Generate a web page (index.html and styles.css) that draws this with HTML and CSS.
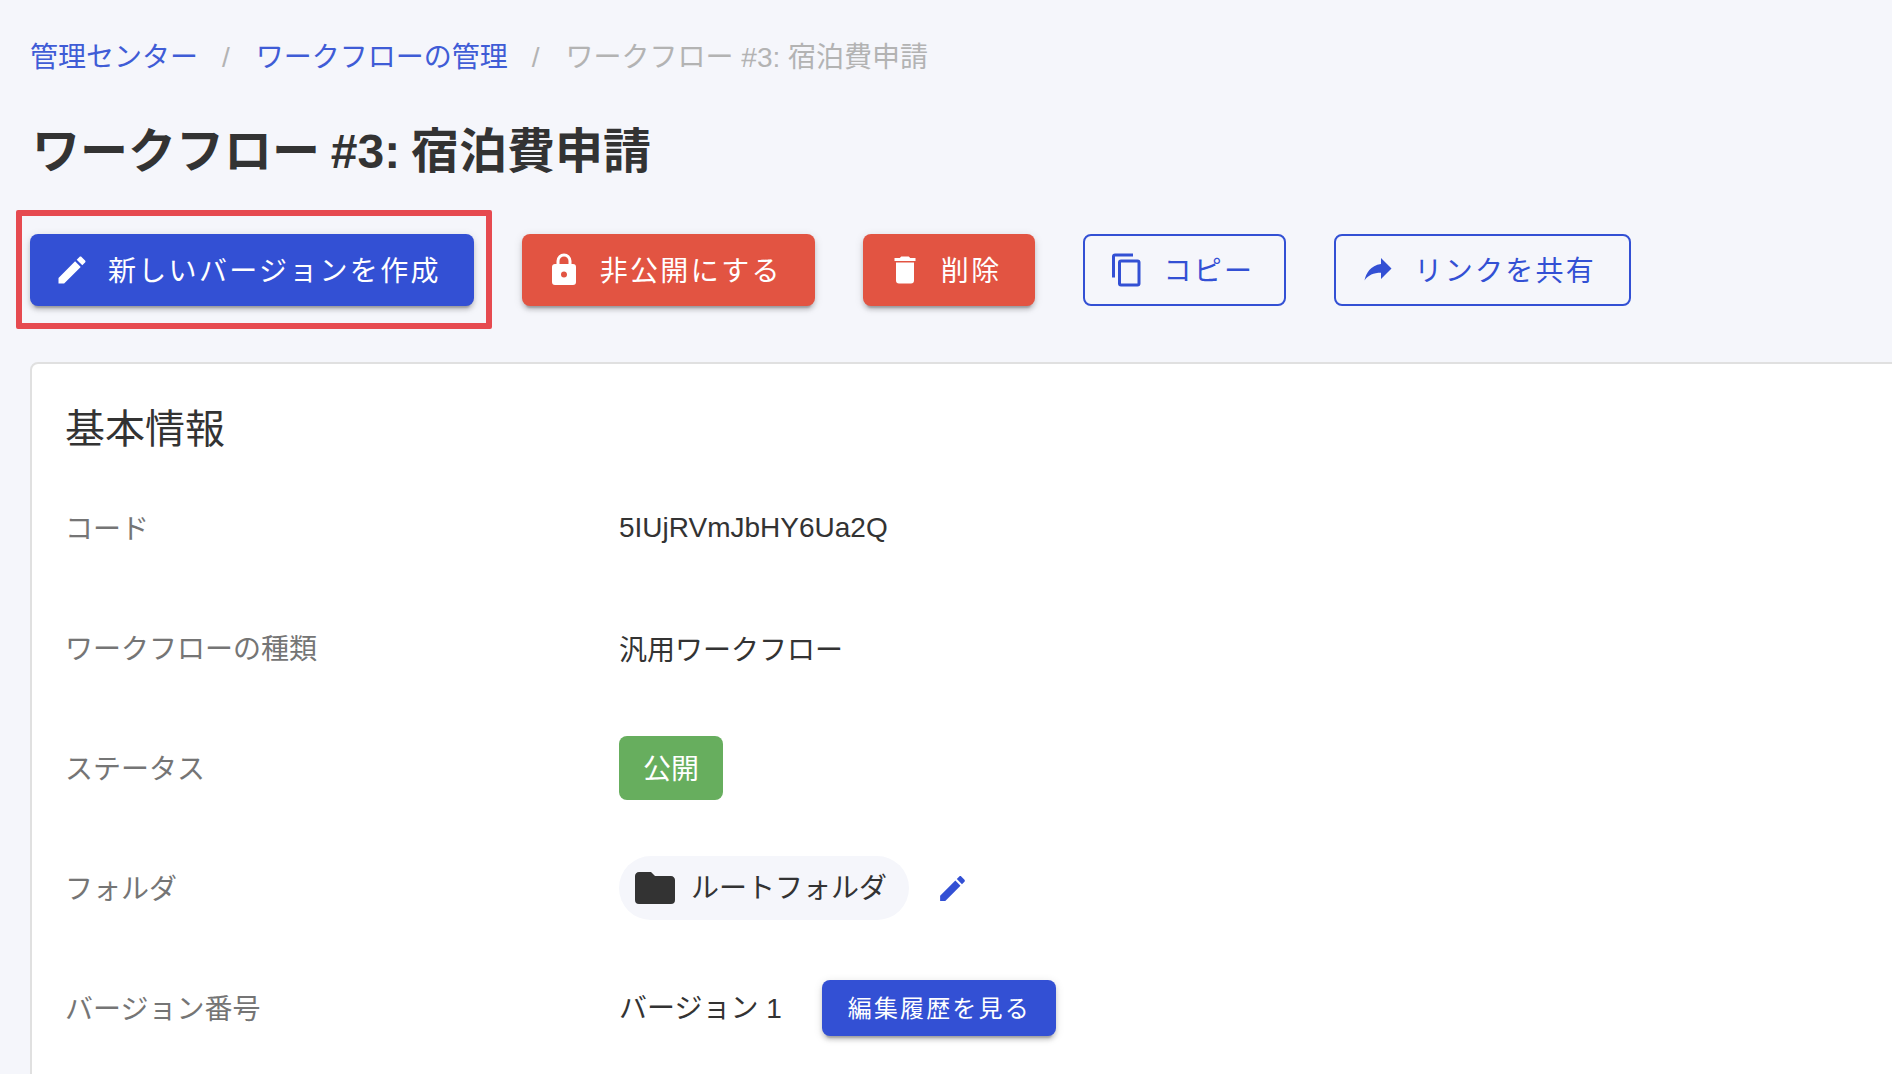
FILE: index.html
```html
<!DOCTYPE html>
<html lang="ja">
<head>
<meta charset="utf-8">
<title>ワークフロー #3: 宿泊費申請</title>
<link rel="stylesheet" href="styles.css">
</head>
<body>
<main class="page">
  <nav class="crumbs">
    <a class="crumb-link">管理センター</a>
    <span class="crumb-sep">/</span>
    <a class="crumb-link">ワークフローの管理</a>
    <span class="crumb-sep">/</span>
    <span class="crumb-current">ワークフロー #3: 宿泊費申請</span>
  </nav>
  <h1 class="title">ワークフロー #3: 宿泊費申請</h1>
  <div class="actions">
    <div class="highlight-wrap">
      <button class="btn btn-primary">
        <svg class="icon" viewBox="0 0 24 24"><path d="M20.71,7.04C21.1,6.65 21.1,6 20.71,5.63L18.37,3.29C18,2.9 17.35,2.9 16.96,3.29L15.12,5.12L18.87,8.87M3,17.25V21H6.75L17.81,9.93L14.06,6.18L3,17.25Z"/></svg>
        <span class="btn-text">新しいバージョンを作成</span>
      </button>
      <div class="highlight"></div>
    </div>
    <button class="btn btn-danger">
      <svg class="icon" viewBox="0 0 24 24"><path d="M12,17A2,2 0 0,0 14,15C14,13.89 13.1,13 12,13A2,2 0 0,0 10,15A2,2 0 0,0 12,17M18,8A2,2 0 0,1 20,10V20A2,2 0 0,1 18,22H6A2,2 0 0,1 4,20V10C4,8.89 4.9,8 6,8H7V6A5,5 0 0,1 12,1A5,5 0 0,1 17,6V8H18M12,3A3,3 0 0,0 9,6V8H15V6A3,3 0 0,0 12,3Z"/></svg>
      <span class="btn-text">非公開にする</span>
    </button>
    <button class="btn btn-danger btn-delete">
      <svg class="icon" viewBox="0 0 24 24"><path d="M19,4H15.5L14.5,3H9.5L8.5,4H5V6H19M6,19A2,2 0 0,0 8,21H16A2,2 0 0,0 18,19V7H6V19Z"/></svg>
      <span class="btn-text">削除</span>
    </button>
    <button class="btn btn-outline">
      <svg class="icon" viewBox="0 0 24 24"><path d="M19,21H8V7H19M19,5H8A2,2 0 0,0 6,7V21A2,2 0 0,0 8,23H19A2,2 0 0,0 21,21V7A2,2 0 0,0 19,5M16,1H4A2,2 0 0,0 2,3V17H4V3H16V1Z"/></svg>
      <span class="btn-text">コピー</span>
    </button>
    <button class="btn btn-outline btn-share">
      <svg class="icon" viewBox="0 0 24 24"><path d="M21,11L14,4V8C7,9 4,14 3,19C5.5,15.5 9,13.9 14,13.9V18L21,11Z"/></svg>
      <span class="btn-text">リンクを共有</span>
    </button>
  </div>
  <section class="card">
    <h2 class="card-title">基本情報</h2>
    <div class="row">
      <div class="label">コード</div>
      <div class="value">5IUjRVmJbHY6Ua2Q</div>
    </div>
    <div class="row">
      <div class="label">ワークフローの種類</div>
      <div class="value">汎用ワークフロー</div>
    </div>
    <div class="row">
      <div class="label">ステータス</div>
      <div class="value"><span class="status">公開</span></div>
    </div>
    <div class="row">
      <div class="label">フォルダ</div>
      <div class="value">
        <span class="folder-chip">
          <svg class="folder-icon" viewBox="0 0 24 24"><path d="M10,4H4C2.89,4 2,4.89 2,6V18A2,2 0 0,0 4,20H20A2,2 0 0,0 22,18V8C22,6.89 21.1,6 20,6H12L10,4Z"/></svg>
          <span class="folder-name">ルートフォルダ</span>
        </span>
        <svg class="edit-icon" viewBox="0 0 24 24"><path d="M20.71,7.04C21.1,6.65 21.1,6 20.71,5.63L18.37,3.29C18,2.9 17.35,2.9 16.96,3.29L15.12,5.12L18.87,8.87M3,17.25V21H6.75L17.81,9.93L14.06,6.18L3,17.25Z"/></svg>
      </div>
    </div>
    <div class="row">
      <div class="label">バージョン番号</div>
      <div class="value">
        <span class="version">バージョン 1</span>
        <button class="btn btn-primary btn-small"><span class="btn-text">編集履歴を見る</span></button>
      </div>
    </div>
  </section>
</main>
</body>
</html>
```

FILE: styles.css
```css
* { box-sizing: border-box; }
html, body { margin: 0; height: 100%; overflow: hidden; }
body {
  background: #f5f6fb;
  color: #333;
  font-family: "Liberation Sans", "Noto Sans CJK JP", sans-serif;
  font-size: 28px;
}
.page { padding: 38px 0 0 30px; }

.crumbs { display: flex; align-items: center; height: 40px; line-height: 40px; }
.crumb-link { color: #3f5cd6; }
.crumb-sep { padding: 0 26px 0 24px; color: #b3b3b3; }
.crumb-current { color: #b3b3b3; }

.title {
  margin: 48px 0 0 2px;
  font-size: 48px;
  line-height: 52px;
  font-weight: 700;
  word-spacing: -2.5px;
  color: #333;
}

.actions { display: flex; gap: 48px; margin-top: 56px; }
.highlight-wrap { position: relative; display: flex; }
.highlight {
  position: absolute;
  left: -14px; top: -24px; right: -18px; bottom: -23px;
  border: 6px solid #e64a50;
  border-radius: 2px;
  pointer-events: none;
}

.btn {
  display: inline-flex;
  align-items: center;
  height: 72px;
  padding: 0 33px 0 24px;
  border: 0;
  border-radius: 8px;
  font-family: inherit;
  font-size: 28px;
  letter-spacing: 2.3px;
  color: #fff;
  white-space: nowrap;
  box-shadow: 0 6px 2px -4px rgba(0,0,0,.2), 0 4px 4px 0 rgba(0,0,0,.14), 0 2px 10px 0 rgba(0,0,0,.12);
}
.btn-text { padding-bottom: 2px; }
.btn-primary { background: #3350d4; }
.btn-danger { background: #e25442; }
.btn-delete { padding-right: 34px; }
.btn-outline {
  background: transparent;
  border: 2px solid #3350d4;
  color: #3350d4;
  box-shadow: none;
  padding-right: 30px;
}
.btn-share { padding-right: 33px; }
.icon { width: 36px; height: 36px; margin-right: 18px; fill: currentColor; flex: none; }

.card {
  margin: 56px -20px 0 0;
  padding: 37px 33px 40px;
  background: #fff;
  border: 2px solid #e0e0e0;
  border-radius: 8px 8px 0 0;
}
.card-title { margin: 0 0 11px; font-size: 40px; line-height: 56px; font-weight: 400; color: #333; }

.row { display: flex; align-items: center; height: 120px; }
.label { width: 554px; padding-bottom: 2px; color: #757575; flex: none; }
.value { display: flex; align-items: center; color: #333; }

.status {
  display: inline-flex;
  align-items: center;
  height: 64px;
  padding: 0 24px 2px;
  border-radius: 8px;
  background: #67ae5e;
  color: #fff;
}

.folder-chip {
  display: inline-flex;
  align-items: center;
  height: 64px;
  padding: 0 22px 0 12px;
  border-radius: 32px;
  background: #f5f6fb;
}
.folder-icon { width: 48px; height: 48px; margin-right: 12px; fill: #333; flex: none; }
.folder-name { padding-bottom: 4px; }
.edit-icon { width: 33px; height: 33px; margin-left: 27px; fill: #3350d4; flex: none; }

.version { margin-right: 40px; padding-bottom: 4px; }
.btn-small { height: 56px; padding: 0 25px 0 26px; font-size: 24px; letter-spacing: 2.14px; }
.btn-small .btn-text { padding-bottom: 4px; }
```
